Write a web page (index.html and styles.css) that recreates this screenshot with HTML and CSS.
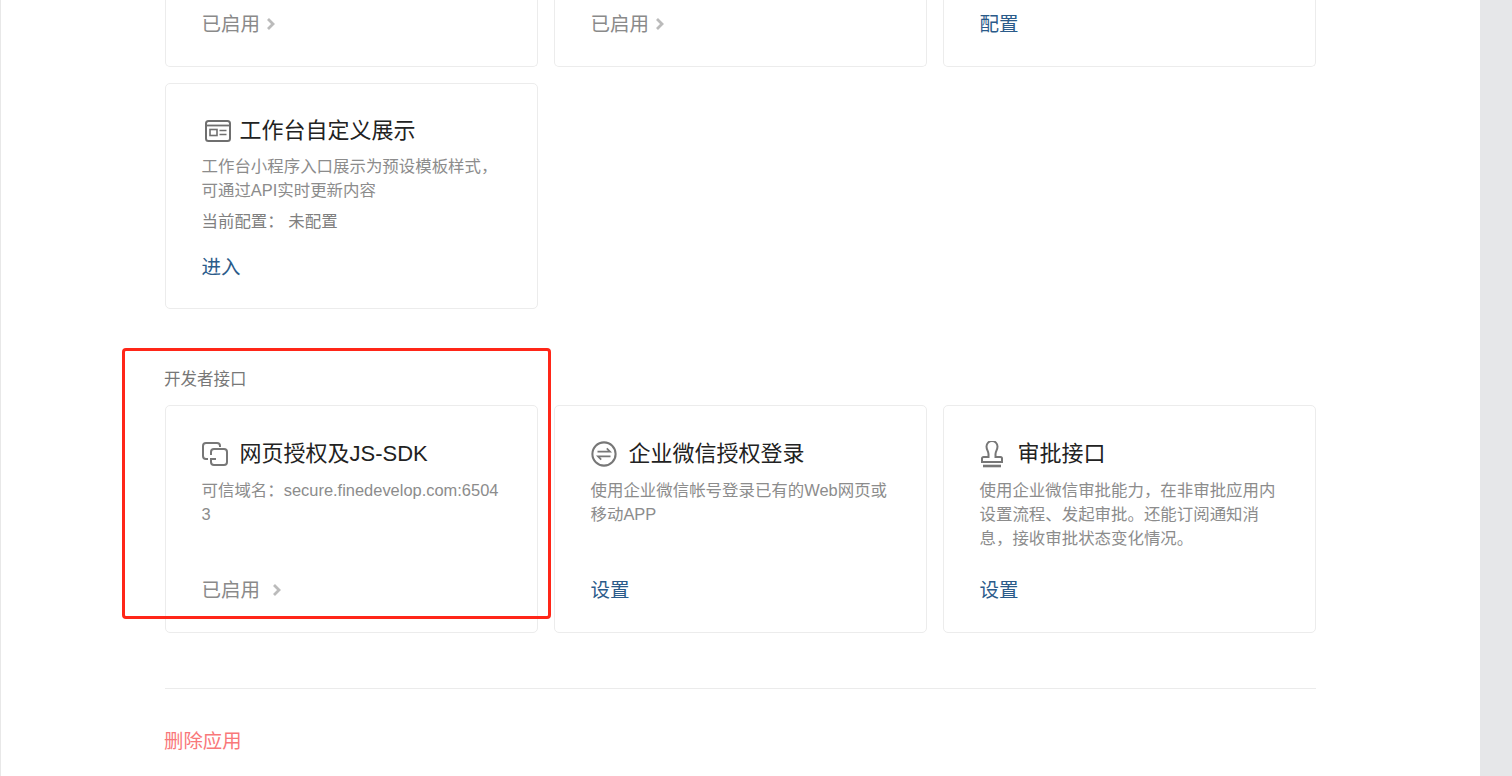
FILE: index.html
```html
<!DOCTYPE html>
<html lang="zh-CN">
<head>
<meta charset="utf-8">
<title>应用详情</title>
<link rel="stylesheet" href="styles.css">
</head>
<body>
<div class="page">
  <main class="main">
    <div class="grid grid-top">
      <div class="card card-cut"><a class="status">已启用<svg class="chev" viewBox="0 0 10 14"><path d="M2 2l5 5-5 5" fill="none" stroke="#bbb" stroke-width="2.8"/></svg></a></div>
      <div class="card card-cut"><a class="status">已启用<svg class="chev" viewBox="0 0 10 14"><path d="M2 2l5 5-5 5" fill="none" stroke="#bbb" stroke-width="2.8"/></svg></a></div>
      <div class="card card-cut"><a class="link">配置</a></div>
    </div>
    <div class="grid grid-second">
      <div class="card card-second">
        <div class="head head-tight">
          <svg class="icon icon-panel" viewBox="0 0 26 22" fill="none" stroke="#6f6f6f"><rect x="1" y="1" width="24" height="20" rx="2.5" stroke-width="2"/><path d="M1 5.500h24" stroke-width="1.800"/><rect x="5" y="9.500" width="7" height="6" stroke-width="1.600"/><path d="M14.500 10.500h7M14.500 14.500h7" stroke-width="1.600"/></svg>
          <h3 class="title">工作台自定义展示</h3>
        </div>
        <p class="desc">工作台小程序入口展示为预设模板样式，<br>可通过API实时更新内容</p>
        <p class="config">当前配置： <span class="config-value">未配置</span></p>
        <a class="link link-config">进入</a>
      </div>
    </div>
    <h2 class="section">开发者接口</h2>
    <div class="grid">
      <div class="card">
        <div class="head">
          <svg class="icon" viewBox="0 0 26 24" fill="none" stroke="#777" stroke-width="2"><path d="M6 17H4a3 3 0 0 1-3-3V4a3 3 0 0 1 3-3h11a3 3 0 0 1 3 3v1"/><path d="M9 13v-3a3 3 0 0 1 3-3h10a3 3 0 0 1 3 3v10a3 3 0 0 1-3 3H12a3 3 0 0 1-3-3v-3h5"/></svg>
          <h3 class="title">网页授权及JS-SDK</h3>
        </div>
        <p class="desc desc-fixed">可信域名：secure.finedevelop.com:6504<br>3</p>
        <a class="status status-spaced">已启用<svg class="chev" viewBox="0 0 10 14"><path d="M2 2l5 5-5 5" fill="none" stroke="#bbb" stroke-width="2.8"/></svg></a>
      </div>
      <div class="card">
        <div class="head">
          <svg class="icon icon-round" viewBox="0 0 28 28" fill="none" stroke="#777"><circle cx="14" cy="14" r="12.500" stroke-width="2.200"/><path d="M7 11.500h13.500l-3.500-3.500M21 16.500H7.500l3.500 3.500" stroke-width="1.800"/></svg>
          <h3 class="title">企业微信授权登录</h3>
        </div>
        <p class="desc desc-fixed">使用企业微信帐号登录已有的Web网页或<br>移动APP</p>
        <a class="link">设置</a>
      </div>
      <div class="card">
        <div class="head">
          <svg class="icon icon-stamp" viewBox="0 0 22 27" fill="none" stroke="#777" stroke-width="2"><path d="M7.500 13c0-3-2-4-2-7.500a5.500 5.500 0 0 1 11 0c0 3.500-2 4.500-2 7.500v3h5a1.500 1.500 0 0 1 1.500 1.500V21H1v-3.500A1.500 1.500 0 0 1 2.500 16h5z"/><path d="M2 25h18" stroke-width="2.600"/></svg>
          <h3 class="title">审批接口</h3>
        </div>
        <p class="desc desc-fixed">使用企业微信审批能力，在非审批应用内<br>设置流程、发起审批。还能订阅通知消<br>息，接收审批状态变化情况。</p>
        <a class="link">设置</a>
      </div>
    </div>
    <hr class="rule">
    <a class="delete">删除应用</a>
  </main>
  <div class="scroll-track"></div>
  <div class="highlight"></div>
</div>
</body>
</html>
```
FILE: styles.css
```css
* { box-sizing: border-box; }
html, body { margin: 0; height: 100%; overflow: hidden; background: #fff; }
body { font-family: "Liberation Sans", "Noto Sans CJK SC", sans-serif; }
.page { position: relative; display: flex; height: 776px; border-left: 1px solid #e8e8e8; }
.main { flex: 1; padding-left: 164px; padding-right: 164px; min-width: 0; }
.scroll-track { width: 32px; background: #e6e7e9; }
.grid { display: grid; grid-template-columns: repeat(3, 373px); column-gap: 16px; }
.grid-top { height: 66px; }
.grid-second { margin-top: 17px; }
.card { display: flex; flex-direction: column; align-items: flex-start; background: #fff; border: 1px solid #ececec; border-radius: 5px; padding: 32px 35px 28px 35.500px; }
.card-second { padding-bottom: 27px; }
.card-cut { border-top: 0; border-radius: 0 0 5px 5px; padding-top: 10px; }
.head { display: flex; align-items: center; height: 30px; margin: 1px 0 9px; }
.head-tight { margin: 0 0 8px; }
.icon { width: 26px; height: 24px; margin-right: 12px; flex: none; }
.icon-panel { margin-left: 3px; margin-right: 9px; height: 22px; }
.icon-round { height: 26px; }
.icon-stamp { width: 22px; height: 27px; margin-left: 1px; margin-right: 15px; }
.title { margin: 0; font-size: 22px; line-height: 30px; font-weight: 400; color: #222; }
.desc { margin: 0; font-size: 16.450px; line-height: 24px; color: #8c8c8c; }
.desc-fixed { height: 72px; margin-bottom: 26px; }
.config { margin: 7px 0 0; font-size: 16.450px; line-height: 24px; color: #808080; }
.config-value { margin-left: 0; }
.link { display: block; font-size: 19.500px; line-height: 28px; color: #2b5b8a; }
.link-config { margin-top: 20px; }
.status { display: flex; align-items: center; font-size: 19.500px; line-height: 28px; color: #8a8a8a; }
.chev { width: 10px; height: 14px; margin-left: 6px; }
.status-spaced .chev { margin-left: 12px; }
.section { margin: 58px 0 14px -1px; font-size: 16.500px; line-height: 24px; font-weight: 400; color: #777; }
.rule { margin: 55px 0 0; border: 0; border-top: 1px solid #ebebeb; }
.delete { display: block; margin: 38px 0 0 -1px; font-size: 19.400px; line-height: 28px; color: #f9787a; }
.highlight { position: absolute; left: 121px; top: 348px; width: 429px; height: 271px; border: 3px solid #ff2618; border-radius: 4px; pointer-events: none; }
```
